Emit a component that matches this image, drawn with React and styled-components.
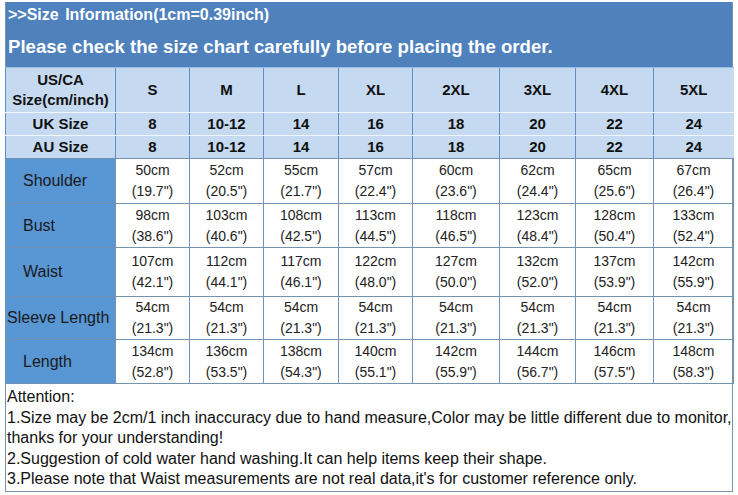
import styled, { createGlobalStyle } from "styled-components";

const GlobalStyle = createGlobalStyle`
    body {
        margin: 0;
        background: #fff;
        font-family: "Liberation Sans", Arial, sans-serif;
    }
`;

const sizes = ["S", "M", "L", "XL", "2XL", "3XL", "4XL", "5XL"];
const colWidths = [110, 74, 74, 75, 74, 87, 76, 78, 80];
const uk = ["8", "10-12", "14", "16", "18", "20", "22", "24"];

const rows = [
    { name: "Shoulder", h: 44, cm: [50, 52, 55, 57, 60, 62, 65, 67], inch: ["19.7", "20.5", "21.7", "22.4", "23.6", "24.4", "25.6", "26.4"] },
    { name: "Bust", h: 43, cm: [98, 103, 108, 113, 118, 123, 128, 133], inch: ["38.6", "40.6", "42.5", "44.5", "46.5", "48.4", "50.4", "52.4"] },
    { name: "Waist", h: 48, cm: [107, 112, 117, 122, 127, 132, 137, 142], inch: ["42.1", "44.1", "46.1", "48.0", "50.0", "52.0", "53.9", "55.9"] },
    { name: "Sleeve Length", h: 42, tight: true, cm: [54, 54, 54, 54, 54, 54, 54, 54], inch: ["21.3", "21.3", "21.3", "21.3", "21.3", "21.3", "21.3", "21.3"] },
    { name: "Length", h: 43, cm: [134, 136, 138, 140, 142, 144, 146, 148], inch: ["52.8", "53.5", "54.3", "55.1", "55.9", "56.7", "57.5", "58.3"] },
];

const App = () => {
    return (
        <>
            <GlobalStyle />
            <Chart>
                <TitleBar>
                    <SubTitle>&gt;&gt;Size Information(1cm=0.39inch)</SubTitle>
                    <Notice>Please check the size chart carefully before placing the order.</Notice>
                </TitleBar>
                <Table>
                    <colgroup>
                        {colWidths.map((w, i) => <col key={i} style={{ width: w }} />)}
                    </colgroup>
                    <thead>
                        <tr>
                            <HeadCell $h={44} $first>US/CA<br />Size(cm/inch)</HeadCell>
                            {sizes.map((s) => <HeadCell key={s} $h={44} $first>{s}</HeadCell>)}
                        </tr>
                        <tr>
                            <HeadCell $h={22}>UK Size</HeadCell>
                            {uk.map((v, i) => <HeadCell key={i} $h={22}>{v}</HeadCell>)}
                        </tr>
                        <tr>
                            <HeadCell $h={22} $last>AU Size</HeadCell>
                            {uk.map((v, i) => <HeadCell key={i} $h={22} $last>{v}</HeadCell>)}
                        </tr>
                    </thead>
                    <tbody>
                        {rows.map((r) => (
                            <tr key={r.name}>
                                <LabelCell $h={r.h} $tight={r.tight}>{r.name}</LabelCell>
                                {r.cm.map((c, i) => (
                                    <ValueCell key={i} $h={r.h}>
                                        {c}cm<br />({r.inch[i]}")
                                    </ValueCell>
                                ))}
                            </tr>
                        ))}
                    </tbody>
                </Table>
                <Attention>
                    <p>Attention:</p>
                    <p>1.Size may be 2cm/1 inch inaccuracy due to hand measure,Color may be little different due to monitor, thanks for your understanding!</p>
                    <p>2.Suggestion of cold water hand washing.It can help items keep their shape.</p>
                    <p>3.Please note that Waist measurements are not real data,it's for customer reference only.</p>
                </Attention>
            </Chart>
        </>
    );
};
export default App;

const Chart = styled.div`
    width: 728px;
    margin: 2px 0 0 5px;
    border: 1px solid #7893ad;
    border-top: none;
    box-sizing: border-box;
`;

const TitleBar = styled.div`
    background-color: #4f81bd;
    color: #fff;
    font-weight: 700;
    padding: 0 0 0 2px;
    height: 65px;
    box-sizing: border-box;
`;

const SubTitle = styled.div`
    font-size: 16px;
    height: 26px;
    line-height: 26px;
    word-spacing: 2px;
`;

const Notice = styled.div`
    font-size: 18.6px;
    height: 39px;
    line-height: 38px;
`;

const Table = styled.table`
    table-layout: fixed;
    border-collapse: collapse;
    margin-left: -1px;
    width: 728px;
`;

const HeadCell = styled.th`
    height: ${(p) => p.$h}px;
    padding: 0;
    background-color: #c5daf0;
    color: #111;
    font-size: 15px;
    font-weight: 700;
    line-height: 20px;
    text-align: center;
    border-left: 1px solid #5f8ec4;
    border-top: 1px solid ${(p) => (p.$first ? "#9ebde2" : "#eef5fc")};
    border-bottom: 1px solid ${(p) => (p.$last ? "#7393b5" : "#eef5fc")};
`;

const LabelCell = styled.td`
    height: ${(p) => p.$h}px;
    padding: 0 0 0 ${(p) => (p.$tight ? 1 : 17)}px;
    background-color: #5896d4;
    color: #1a1a1a;
    font-size: 16px;
    white-space: nowrap;
    border: 1px solid #7393b5;
`;

const ValueCell = styled.td`
    height: ${(p) => p.$h}px;
    padding: 0;
    text-align: center;
    color: #222;
    font-size: 14px;
    line-height: 21px;
    border: 1px solid #7393b5;
`;

const Attention = styled.div`
    padding: 3px 0 3px 1px;
    color: #111;
    font-size: 16px;
    line-height: 20.5px;
    height: 107px;
    box-sizing: border-box;
    & > p {
        margin: 0;
    }
`;
